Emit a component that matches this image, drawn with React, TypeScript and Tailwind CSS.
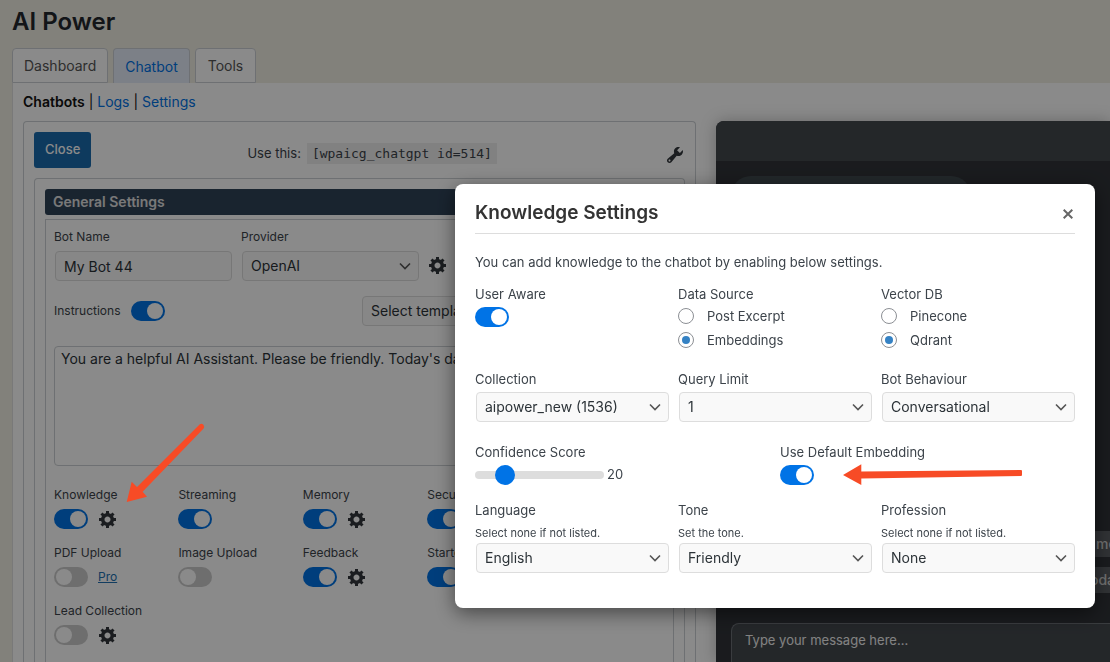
import React from "react";

const font = "font-['Inter',sans-serif]";

function Toggle({ id, on = true }: { id: string; on?: boolean }) {
  return (
    <input
      id={id}
      type="checkbox"
      role="switch"
      defaultChecked={on}
      className="relative h-5 w-[34px] shrink-0 appearance-none rounded-full bg-[#ccc] before:absolute before:left-0.5 before:top-0.5 before:size-4 before:rounded-full before:bg-white before:content-[''] checked:bg-[#0073e6] checked:before:left-4"
    />
  );
}

function Gear() {
  return (
    <svg viewBox="0 0 20 20" className="size-5" fill="#32373c" aria-hidden="true">
      <path
        fillRule="evenodd"
        d="M18 12h-2.18c-.17.7-.44 1.35-.81 1.93l1.54 1.54-2.1 2.1-1.54-1.54c-.58.36-1.23.63-1.91.79V19H8v-2.18c-.68-.16-1.33-.43-1.91-.79l-1.54 1.54-2.12-2.12 1.54-1.54c-.36-.58-.63-1.23-.79-1.91H1V9.03h2.17c.16-.7.44-1.35.8-1.94L2.43 5.55l2.1-2.1 1.54 1.54c.58-.37 1.24-.64 1.93-.81V2h3v2.18c.68.16 1.33.43 1.91.79l1.54-1.54 2.12 2.12-1.54 1.54c.36.59.64 1.24.8 1.94H18V12zm-8.500 1.500c1.660 0 3-1.340 3-3s-1.340-3-3-3-3 1.340-3 3 1.340 3 3 3z"
      />
    </svg>
  );
}

function Wrench() {
  return (
    <svg viewBox="0 0 20 20" className="size-5" fill="#32373c" aria-hidden="true">
      <path d="M16.68 9.77c-1.34 1.34-3.3 1.67-4.95.99l-5.41 6.52c-.99.99-2.590.99-3.580 0s-.99-2.590 0-3.570l6.520-5.420c-.68-1.650-.35-3.610.99-4.950 1.280-1.280 3.120-1.620 4.720-1.060l-2.890 2.890 2.820 2.820 2.860-2.870c.53 1.580.18 3.390-1.080 4.650zM3.810 16.210c.4.390 1.040.390 1.430 0 .4-.4.4-1.040 0-1.430-.39-.4-1.030-.4-1.430 0-.39.390-.39 1.030 0 1.430z" />
    </svg>
  );
}

function Select({ id, value, className = "" }: { id: string; value: string; className?: string }) {
  return (
    <div className={`relative ml-px ${className}`}>
      <select
        id={id}
        className="block h-[30px] w-full appearance-none rounded-[4px] border border-[#ddd] bg-[#f9f9f9] pl-2 pr-6 text-[14px] leading-[28px] text-[#2c3338]"
      >
        <option>{value}</option>
      </select>
      <svg
        viewBox="0 0 16 16"
        className="pointer-events-none absolute right-1.5 top-[7px] size-4"
        fill="none"
        stroke="#555"
        strokeWidth="1.6"
        aria-hidden="true"
      >
        <path d="M3 5.500L8 10.500L13 5.500" />
      </svg>
    </div>
  );
}

function Field({
  id,
  label,
  note,
  small = false,
  children,
}: {
  id: string;
  label: string;
  note?: string;
  small?: boolean;
  children: React.ReactNode;
}) {
  return (
    <div>
      <label htmlFor={id} className={`block leading-[18px] text-[#3c434a] ${small ? "text-[12px]" : "text-[13px]"}`}>
        {label}
      </label>
      {note && <p className="mt-1.5 text-[11px] leading-4 text-[#3c434a]">{note}</p>}
      {children}
    </div>
  );
}

function RadioGroup({ label, name, options }: { label: string; name: string; options: string[] }) {
  return (
    <fieldset>
      <legend className="block text-[13px] leading-[18px] text-[#3c434a]">{label}</legend>
      <div className="mt-[5px] flex flex-col gap-2">
        {options.map((o, i) => (
          <label key={o} className="flex items-center gap-[13px] text-[13px] leading-4 text-[#3c434a]">
            <input
              type="radio"
              name={name}
              defaultChecked={i === 1}
              className="flex size-4 appearance-none items-center justify-center rounded-full border border-[#8c8f94] bg-white before:size-2 before:rounded-full before:content-[''] checked:before:bg-[#3582c4]"
            />
            {o}
          </label>
        ))}
      </div>
    </fieldset>
  );
}

const features = [
  { name: "Knowledge", on: true, extra: "gear" },
  { name: "Streaming", on: true },
  { name: "Memory", on: true, extra: "gear" },
  { name: "Security", on: true, extra: "gear" },
  { name: "Speech", on: true },
  { name: "PDF Upload", on: false, extra: "pro" },
  { name: "Image Upload", on: false },
  { name: "Feedback", on: true, extra: "gear" },
  { name: "Starters", on: true, extra: "gear" },
  { name: "Sidebar", on: true },
  { name: "Lead Collection", on: false, extra: "gear" },
];

function BotForm() {
  return (
    <section className="flex flex-1 flex-col rounded-t-[4px] border border-b-0 border-[#ccd0d4] px-2.5 pt-2.5">
      <header className="flex h-9 items-start justify-between">
        <button className="h-9 rounded-[3px] bg-[#1a6bae] px-[11px] text-[13px] font-medium text-white">Close</button>
        <p className="mt-[11px] flex items-center gap-1.5 pr-3 text-[13px] leading-[21px] text-[#3c434a]">
          Use this:
          <code className="bg-[#efefef] px-[5px] font-['DejaVu_Sans_Mono',monospace] text-[13px]">[wpaicg_chatgpt id=514]</code>
        </p>
        <button aria-label="Tools" className="mt-[13px]">
          <Wrench />
        </button>
      </header>

      <div className="mt-2.5 flex flex-1 flex-col rounded-t-[4px] border border-b-0 border-[#ccd0d4] px-2.5 pt-2.5">
        <h2 className="h-[26px] rounded-[3px] bg-[#2f4358] px-2 text-[14px] font-semibold leading-[26px] text-[#e0e0e0]">General Settings</h2>
        <div className="mt-1 flex-1 border border-b-0 border-[#ccd0d4] px-2 pt-2">
          <div className="flex items-end gap-[9px]">
            <Field id="bot" label="Bot Name" small>
              <input
                id="bot"
                defaultValue="My Bot 44"
                className="ml-px mt-[5px] block h-[30px] w-[177px] rounded-[4px] border border-[#ddd] bg-[#f9f9f9] px-2 text-[14px] text-[#2c3338]"
              />
            </Field>
            <Field id="provider" label="Provider" small>
              <Select id="provider" value="OpenAI" className="mt-[5px] w-[177px]" />
            </Field>
            <button aria-label="Provider settings" className="mb-1.5">
              <Gear />
            </button>
          </div>

          <div className="mt-[15px] flex items-center justify-between">
            <div className="flex items-center gap-2.5">
              <label htmlFor="instr" className="text-[12px] leading-[18px] text-[#3c434a]">
                Instructions
              </label>
              <Toggle id="instr" />
            </div>
            <Select id="template" value="Select template" className="w-[303px]" />
          </div>

          <textarea
            aria-label="Instructions text"
            defaultValue="You are a helpful AI Assistant. Please be friendly. Today's date is [date]."
            className="mt-5 block h-[120px] w-full resize-none rounded-[4px] border border-[#ccd0d4] bg-white px-1.5 py-0.5 text-[14px] leading-5 text-[#2c3338]"
          />

          <div className="mt-5 grid grid-cols-5 gap-x-[11px] gap-y-[15px]">
            {features.map((f) => (
              <div key={f.name}>
                <label htmlFor={f.name} className="block text-[12px] leading-[18px] text-[#3c434a]">
                  {f.name}
                </label>
                <div className="mt-[5px] flex h-5 items-center gap-2.5">
                  <Toggle id={f.name} on={f.on} />
                  {f.extra === "gear" && (
                    <button aria-label={`${f.name} settings`}>
                      <Gear />
                    </button>
                  )}
                  {f.extra === "pro" && (
                    <a href="#pro" className="text-[12px] leading-4 text-[#2271b1] underline">
                      Pro
                    </a>
                  )}
                </div>
              </div>
            ))}
          </div>
        </div>
      </div>
    </section>
  );
}

function ChatPreview() {
  return (
    <section className="flex flex-col overflow-hidden rounded-tl-[8px] bg-[#303338] shadow-[0_0_16px_rgba(0,0,0,0.25)]">
      <div className="h-10 bg-[#43484d]" />
      <div className="flex flex-1 flex-col pl-[15px] pt-[15px] text-[14px] text-[#e8e8e8]">
        <div className="h-20 w-[240px] rounded-[20px] bg-[#3f494e]" />
        <div className="ml-auto mt-auto flex flex-col items-end gap-2.5 overflow-hidden whitespace-nowrap font-medium leading-[26px] text-[#d0d0d0]">
          <span className="w-[86px] bg-[#5a5e63] pl-[72px]">me</span>
          <span className="w-[86px] bg-[#5a5e63] pl-[66px]">oday</span>
        </div>
        <input
          aria-label="Message"
          placeholder="Type your message here..."
          className="mt-[30px] h-[39px] w-full rounded-tl-[8px] border border-b-0 border-r-0 border-[#6b7075] bg-[#43484d] px-[13px] pb-1.5 text-[13px] placeholder:text-[#f0f0f0]"
        />
      </div>
    </section>
  );
}

function KnowledgeDialog() {
  return (
    <div
      role="dialog"
      aria-labelledby="kt"
      className="w-[640px] max-w-full rounded-[8px] bg-white px-5 pb-[35px] pt-4 text-[#3c434a] shadow-[0_5px_20px_rgba(0,0,0,0.5)]"
    >
      <header className="flex h-[34px] items-start justify-between border-b border-[#ddd]">
        <h2 id="kt" className="text-[19px] font-semibold leading-[26px] text-[#333]">
          Knowledge Settings
        </h2>
        <button aria-label="Close dialog" className="mr-0.5 mt-[9px]">
          <svg viewBox="0 0 10 10" className="size-2.5" stroke="#666" strokeWidth="2" aria-hidden="true">
            <path d="M0.700 0.700L9.300 9.300M9.300 0.700L0.700 9.300" />
          </svg>
        </button>
      </header>
      <p className="mt-[19px] text-[13px] leading-[18px]">You can add knowledge to the chatbot by enabling below settings.</p>
      <div className="mt-3.5 grid grid-cols-3 gap-x-[9px]">
        <Field id="aware" label="User Aware">
          <div className="mt-1 flex">
            <Toggle id="aware" />
          </div>
        </Field>
        <RadioGroup label="Data Source" name="source" options={["Post Excerpt", "Embeddings"]} />
        <RadioGroup label="Vector DB" name="db" options={["Pinecone", "Qdrant"]} />
      </div>
      <div className="mt-[22px] grid grid-cols-3 gap-x-[9px]">
        <Field id="collection" label="Collection">
          <Select id="collection" value="aipower_new (1536)" className="mt-1" />
        </Field>
        <Field id="limit" label="Query Limit">
          <Select id="limit" value="1" className="mt-1" />
        </Field>
        <Field id="behaviour" label="Bot Behaviour">
          <Select id="behaviour" value="Conversational" className="mt-1" />
        </Field>
      </div>
      <div className="mt-[21px] grid grid-cols-2 gap-x-2.5">
        <Field id="score" label="Confidence Score">
          <div className="mt-1 flex h-5 items-center gap-[3px]">
            <input
              id="score"
              type="range"
              min="0"
              max="100"
              defaultValue="18"
              className="h-2 w-[129px] appearance-none rounded-full bg-[#ddd] [&::-webkit-slider-thumb]:size-5 [&::-webkit-slider-thumb]:appearance-none [&::-webkit-slider-thumb]:rounded-full [&::-webkit-slider-thumb]:bg-[#0073e6]"
            />
            <output htmlFor="score" className="text-[13px]">20</output>
          </div>
        </Field>
        <Field id="default" label="Use Default Embedding">
          <div className="mt-1 flex">
            <Toggle id="default" />
          </div>
        </Field>
      </div>
      <div className="mt-4 grid grid-cols-3 gap-x-[9px]">
        <Field id="language" label="Language" note="Select none if not listed.">
          <Select id="language" value="English" className="mt-0.5" />
        </Field>
        <Field id="tone" label="Tone" note="Set the tone.">
          <Select id="tone" value="Friendly" className="mt-0.5" />
        </Field>
        <Field id="profession" label="Profession" note="Select none if not listed.">
          <Select id="profession" value="None" className="mt-0.5" />
        </Field>
      </div>
    </div>
  );
}

export default function App() {
  return (
    <div className={`flex min-h-screen flex-col overflow-hidden bg-[#f0eee4] pl-3 ${font}`}>
      <h1 className="pt-1.5 text-[24px] font-semibold leading-8 text-[#23282d]">AI Power</h1>
      <nav className="mt-2.5 flex items-stretch gap-[5px] text-[14px] leading-5">
        <a href="#dashboard" className="rounded-t-[4px] border border-[#ccd0d4] bg-white px-[11px] pb-1.5 pt-[7px] text-[#555]">
          Dashboard
        </a>
        <a href="#chatbot" className="rounded-t-[4px] border border-b-0 border-[#ccd0d4] bg-[#e6edfa] px-[11px] pt-2 text-[#0073e6]">
          Chatbot
        </a>
        <a href="#tools" className="rounded-t-[4px] border border-[#ccd0d4] bg-white px-3 pb-1.5 pt-[7px] text-[#555]">
          Tools
        </a>
      </nav>
      <main className="flex flex-1 flex-col border-l border-[#e0e0e0] bg-white pl-2.5 pt-[9px]">
        <nav className="text-[14px] leading-5 text-[#111]">
          <strong className="font-semibold">Chatbots</strong> |{" "}
          <a href="#logs" className="text-[#0073e6]">
            Logs
          </a>{" "}
          |{" "}
          <a href="#settings" className="text-[#0073e6]">
            Settings
          </a>
        </nav>
        <div className="mt-[9px] grid flex-1 grid-cols-[minmax(0,673fr)_minmax(0,394fr)] gap-5">
          <BotForm />
          <ChatPreview />
        </div>
      </main>

      <div className="fixed inset-0 flex items-start justify-end overflow-hidden bg-black/46 pr-[15px] pt-[184px]">
        <KnowledgeDialog />
      </div>

      <svg className="pointer-events-none absolute left-[120px] top-[420px] h-[90px] w-[90px]" viewBox="120 420 90 90" fill="#f74b26" aria-hidden="true">
        <path d="M126.700 502L131.700 481.700L137 487L199.800 424.300Q202 423 203.500 425Q205 427.500 203.600 428.600L142.600 491.700L147 496.700Z" />
      </svg>
      <svg className="pointer-events-none absolute left-[840px] top-[460px] h-[30px] w-[190px]" viewBox="840 460 190 30" fill="#f74b26" aria-hidden="true">
        <path d="M843 475L861.300 464.300V471.500L1021 470Q1022 470 1022 471V475Q1022 476 1021 476L861.300 478.500V485Z" />
      </svg>
    </div>
  );
}
